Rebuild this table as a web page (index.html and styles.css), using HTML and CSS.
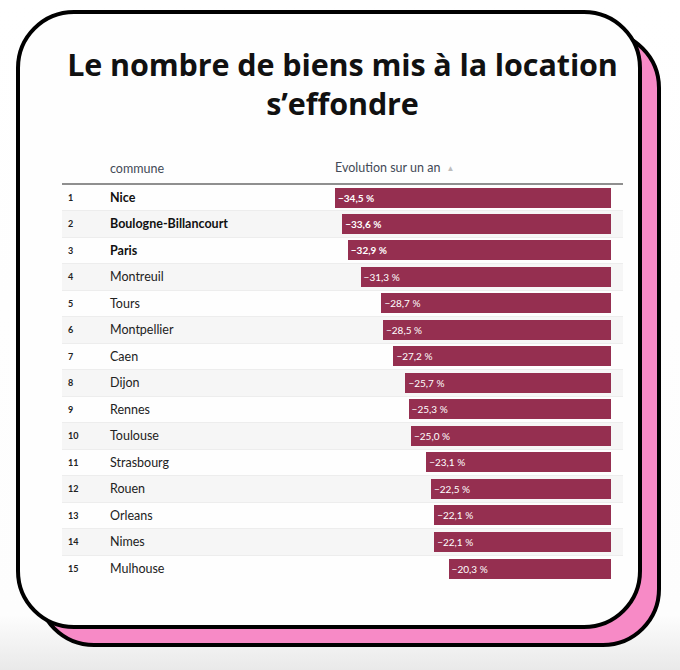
FILE: index.html
```html
<!DOCTYPE html>
<html lang="fr">
<head>
<meta charset="utf-8">
<title>Le nombre de biens mis à la location s’effondre</title>
<link rel="stylesheet" href="styles.css">
</head>
<body>
<div class="stage">
  <div class="card">
    <h1 class="title">Le nombre de biens mis à la location<br>s’effondre</h1>
    <table class="ranking">
      <thead>
        <tr>
          <th class="col-rank"></th>
          <th class="col-name">commune</th>
          <th class="col-bar">Evolution sur un an <span class="sort">▲</span></th>
        </tr>
      </thead>
      <tbody>
        <tr class="top"><td class="rank">1</td><td class="name">Nice</td><td class="barcell"><div class="bar" style="width:276px">−34,5 %</div></td></tr>
        <tr class="top"><td class="rank">2</td><td class="name">Boulogne-Billancourt</td><td class="barcell"><div class="bar" style="width:268.8px">−33,6 %</div></td></tr>
        <tr class="top"><td class="rank">3</td><td class="name">Paris</td><td class="barcell"><div class="bar" style="width:263.2px">−32,9 %</div></td></tr>
        <tr><td class="rank">4</td><td class="name">Montreuil</td><td class="barcell"><div class="bar" style="width:250.4px">−31,3 %</div></td></tr>
        <tr><td class="rank">5</td><td class="name">Tours</td><td class="barcell"><div class="bar" style="width:229.6px">−28,7 %</div></td></tr>
        <tr><td class="rank">6</td><td class="name">Montpellier</td><td class="barcell"><div class="bar" style="width:228px">−28,5 %</div></td></tr>
        <tr><td class="rank">7</td><td class="name">Caen</td><td class="barcell"><div class="bar" style="width:217.6px">−27,2 %</div></td></tr>
        <tr><td class="rank">8</td><td class="name">Dijon</td><td class="barcell"><div class="bar" style="width:205.6px">−25,7 %</div></td></tr>
        <tr><td class="rank">9</td><td class="name">Rennes</td><td class="barcell"><div class="bar" style="width:202.4px">−25,3 %</div></td></tr>
        <tr><td class="rank">10</td><td class="name">Toulouse</td><td class="barcell"><div class="bar" style="width:200px">−25,0 %</div></td></tr>
        <tr><td class="rank">11</td><td class="name">Strasbourg</td><td class="barcell"><div class="bar" style="width:184.8px">−23,1 %</div></td></tr>
        <tr><td class="rank">12</td><td class="name">Rouen</td><td class="barcell"><div class="bar" style="width:180px">−22,5 %</div></td></tr>
        <tr><td class="rank">13</td><td class="name">Orleans</td><td class="barcell"><div class="bar" style="width:176.8px">−22,1 %</div></td></tr>
        <tr><td class="rank">14</td><td class="name">Nimes</td><td class="barcell"><div class="bar" style="width:176.8px">−22,1 %</div></td></tr>
        <tr><td class="rank">15</td><td class="name">Mulhouse</td><td class="barcell"><div class="bar" style="width:162.4px">−20,3 %</div></td></tr>
      </tbody>
    </table>
  </div>
</div>
</body>
</html>
```

FILE: styles.css
```css
html, body {
  margin: 0;
  padding: 0;
}
body {
  width: 680px;
  height: 670px;
  overflow: hidden;
  background: linear-gradient(to bottom, #ffffff 0, #fdfdfd 615px, #e9e9e9 670px);
  font-family: "Lato", "Liberation Sans", sans-serif;
  color: #222;
}
.stage {
  position: relative;
  padding: 10px 0 0 16px;
}
.stage::before {
  content: "";
  position: absolute;
  left: 36px;
  top: 30px;
  width: 625px;
  height: 617px;
  box-sizing: border-box;
  border: 4px solid #000;
  border-radius: 58px;
  background: #f78ac6;
}
.card {
  position: relative;
  z-index: 1;
  box-sizing: border-box;
  width: 626px;
  height: 619px;
  border: 4px solid #000;
  border-radius: 58px;
  background: #fefefe;
  padding: 31px 15px 0 42px;
}
.title {
  margin: 0 0 37px;
  font-family: "Open Sans", "Noto Sans", sans-serif;
  font-weight: 700;
  font-size: 30.5px;
  line-height: 39px;
  text-align: center;
  color: #111;
  letter-spacing: -0.1px;
}
.ranking {
  width: 561px;
  border-collapse: collapse;
  table-layout: fixed;
  font-size: 12.5px;
}
.ranking th {
  font-weight: 400;
  text-align: left;
  color: #434a57;
  line-height: 15px;
  padding: 0 0 7px;
  border-bottom: 2px solid #8f8f8f;
  vertical-align: bottom;
}
.col-rank { width: 48px; }
.col-name { width: 225px; }
.sort {
  font-size: 8px;
  color: #bdbdbd;
  margin-left: 3px;
  vertical-align: 1px;
}
.ranking td {
  height: 26.5px;
  padding: 0;
  box-sizing: border-box;
  border-bottom: 1px solid #ededed;
  vertical-align: middle;
}
.ranking tbody tr:nth-child(even) td {
  background: #f6f6f6;
}
.ranking tbody tr:last-child td {
  border-bottom: none;
}
.rank {
  font-size: 9px;
  font-weight: 700;
  padding-left: 6px !important;
}
.name {
  color: #222;
}
.top .name {
  font-weight: 700;
  color: #111;
}
.barcell {
  padding-right: 12px !important;
}
.bar {
  margin-left: auto;
  height: 20px;
  box-sizing: border-box;
  background: #952f50;
  color: #fff;
  font-size: 10px;
  line-height: 20px;
  padding-left: 3px;
  white-space: nowrap;
}
.top .bar {
  font-weight: 700;
}
```
